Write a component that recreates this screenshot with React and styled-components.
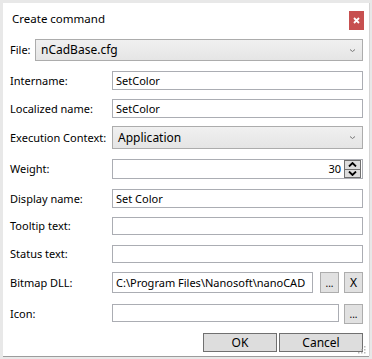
import styled, { createGlobalStyle } from "styled-components";

const Global = createGlobalStyle`
  html, body {
    margin: 0;
    padding: 0;
    background: #e8e8e8;
  }
  body {
    width: 372px;
    height: 359px;
    overflow: hidden;
    font-family: "Segoe UI", "Noto Sans", sans-serif;
    font-size: 11px;
    color: #000;
  }
`;

const Window = styled.div`
  margin: 3px 0 0 3px;
  width: 366px;
  height: 353px;
  box-sizing: border-box;
  padding: 0 6px 0 7px;
  background: #fff;
  box-shadow: 0 1px 0 #9c9c9c, 1px 0 0 #d4d4d4;
  display: flex;
  flex-direction: column;
  position: relative;
`;

const TitleBar = styled.div`
  height: 36px;
  box-sizing: border-box;
  padding: 8px 0 0 2px;
  display: flex;
  justify-content: space-between;
  align-items: flex-start;
`;

const Title = styled.div`
  font-size: 11.5px;
  line-height: 16px;
`;

const CloseBtn = styled.div`
  width: 15px;
  height: 19px;
  margin-right: -1px;
  background: #c75050;
  display: flex;
  align-items: center;
  justify-content: center;
`;

const Row = styled.div`
  display: grid;
  grid-template-columns: ${(p) => p.$label || 102}px 1fr;
  height: ${(p) => p.$h}px;
  margin-top: ${(p) => p.$gap}px;
`;

const Label = styled.div`
  align-self: center;
  line-height: 16px;
  white-space: nowrap;
`;

const Controls = styled.div`
  display: flex;
  align-items: ${(p) => p.$align || "stretch"};
  min-width: 0;
`;

const Combo = styled.div`
  flex: 1;
  box-sizing: border-box;
  border: 1px solid #acacac;
  background: linear-gradient(#f0f0f0, #e5e5e5);
  display: flex;
  align-items: center;
  justify-content: space-between;
  padding: 0 6px 0 5px;
  line-height: 16px;
  font-size: 12px;
`;

const TextBox = styled.div`
  flex: 1;
  min-width: 0;
  box-sizing: border-box;
  border: 1px solid #abadb3;
  background: #fff;
  padding: 0 3px;
  display: flex;
  align-items: center;
  overflow: hidden;
  white-space: nowrap;
  line-height: 16px;
  height: ${(p) => (p.$h ? `${p.$h}px` : "auto")};
`;

const SpinBox = styled(TextBox)`
  padding: 0 1px 0 3px;
  justify-content: flex-end;
  gap: 3px;
`;

const SpinButtons = styled.div`
  width: 17px;
  height: 18px;
  display: flex;
  flex-direction: column;
`;

const SpinButton = styled.div`
  flex: 1;
  box-sizing: border-box;
  border: 1px solid #707070;
  background: #dddddd;
  display: flex;
  align-items: center;
  justify-content: center;
  & + & {
    border-top: none;
  }
`;

const SmallButton = styled.div`
  box-sizing: border-box;
  width: 19px;
  margin-left: ${(p) => p.$ml || 5}px;
  border: 1px solid #adadad;
  background: #e1e1e1;
  display: flex;
  align-items: center;
  justify-content: center;
  height: ${(p) => (p.$h ? `${p.$h}px` : "auto")};
  line-height: 16px;
  font-size: ${(p) => p.$size || 12}px;
`;

const Footer = styled.div`
  display: flex;
  justify-content: flex-end;
  gap: 2px;
  margin-top: 9px;
  height: 19px;
`;

const DialogButton = styled.div`
  box-sizing: border-box;
  width: ${(p) => p.$w}px;
  border: 1px solid #707070;
  background: #dddddd;
  display: flex;
  align-items: center;
  justify-content: center;
  line-height: 16px;
  font-size: 12px;
`;

const Grip = styled.svg`
  position: absolute;
  right: 3px;
  bottom: 2px;
`;

const Chevron = () => (
  <svg width="7" height="5" viewBox="0 0 7 5">
    <path d="M1 1.5 L3.5 3.5 L6 1.5" fill="none" stroke="#777" strokeWidth="1" />
  </svg>
);

const Arrow = ({ up }) => (
  <svg width="9" height="5" viewBox="0 0 9 5">
    <path
      d={up ? "M1 4.5 L4.5 1 L8 4.5" : "M1 0.5 L4.5 4 L8 0.5"}
      fill="none"
      stroke="#000"
      strokeWidth="1.8"
    />
  </svg>
);

const App = () => (
  <>
    <Global />
    <Window>
      <TitleBar>
        <Title>Create command</Title>
        <CloseBtn>
          <svg width="7" height="7" viewBox="0 0 7 7">
            <path d="M1 1 L6 6 M6 1 L1 6" stroke="#fff" strokeWidth="1.8" />
          </svg>
        </CloseBtn>
      </TitleBar>

      <Row $label={25} $h={22} $gap={0}>
        <Label>File:</Label>
        <Controls>
          <Combo>
            <span>nCadBase.cfg</span>
            <Chevron />
          </Combo>
        </Controls>
      </Row>

      <Row $h={19} $gap={10}>
        <Label>Intername:</Label>
        <Controls>
          <TextBox>SetColor</TextBox>
        </Controls>
      </Row>

      <Row $h={19} $gap={9}>
        <Label>Localized name:</Label>
        <Controls>
          <TextBox>SetColor</TextBox>
        </Controls>
      </Row>

      <Row $h={23} $gap={8}>
        <Label>Execution Context:</Label>
        <Controls>
          <Combo>
            <span>Application</span>
            <Chevron />
          </Combo>
        </Controls>
      </Row>

      <Row $h={20} $gap={10}>
        <Label>Weight:</Label>
        <Controls>
          <SpinBox>
            <span>30</span>
            <SpinButtons>
              <SpinButton>
                <Arrow up />
              </SpinButton>
              <SpinButton>
                <Arrow />
              </SpinButton>
            </SpinButtons>
          </SpinBox>
        </Controls>
      </Row>

      <Row $h={19} $gap={10}>
        <Label>Display name:</Label>
        <Controls>
          <TextBox>Set Color</TextBox>
        </Controls>
      </Row>

      <Row $h={18} $gap={9}>
        <Label>Tooltip text:</Label>
        <Controls>
          <TextBox />
        </Controls>
      </Row>

      <Row $h={18} $gap={10}>
        <Label>Status text:</Label>
        <Controls>
          <TextBox />
        </Controls>
      </Row>

      <Row $h={21} $gap={9}>
        <Label>Bitmap DLL:</Label>
        <Controls>
          <TextBox>C:\Program Files\Nanosoft\nanoCAD</TextBox>
          <SmallButton $ml={7} $size={10}>
            ...
          </SmallButton>
          <SmallButton>X</SmallButton>
        </Controls>
      </Row>

      <Row $h={20} $gap={11}>
        <Label>Icon:</Label>
        <Controls $align="flex-start">
          <TextBox $h={18} />
          <SmallButton $h={20} $size={10}>
            ...
          </SmallButton>
        </Controls>
      </Row>

      <Footer>
        <DialogButton $w={74}>OK</DialogButton>
        <DialogButton $w={84}>Cancel</DialogButton>
      </Footer>

      <Grip width="8" height="8" viewBox="0 0 8 8">
        <g fill="#b8b8b8">
          <rect x="6" y="0" width="1.5" height="1.5" />
          <rect x="3" y="3" width="1.5" height="1.5" />
          <rect x="6" y="3" width="1.5" height="1.5" />
          <rect x="0" y="6" width="1.5" height="1.5" />
          <rect x="3" y="6" width="1.5" height="1.5" />
          <rect x="6" y="6" width="1.5" height="1.5" />
        </g>
      </Grip>
    </Window>
  </>
);

export default App;
